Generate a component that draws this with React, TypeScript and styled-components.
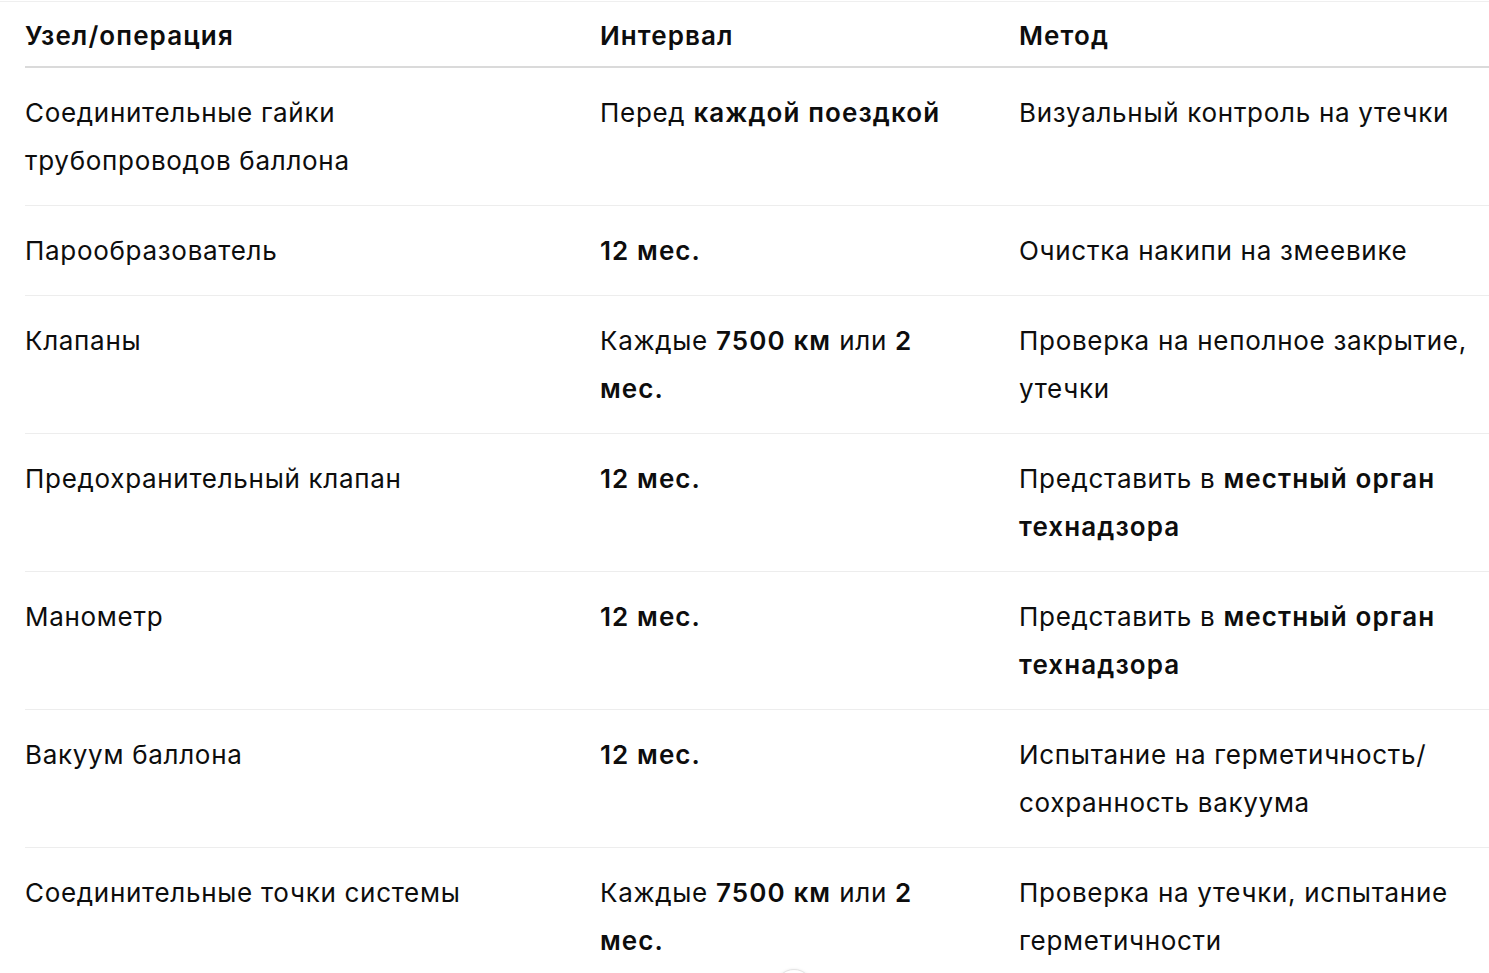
import React from "react";
import styled, { createGlobalStyle } from "styled-components";

const GlobalStyle = createGlobalStyle`
  html, body {
    margin: 0;
    padding: 0;
    background: #ffffff;
    overflow: hidden;
  }
  body {
    font-family: Inter, "Noto Sans", "Liberation Sans", sans-serif;
    color: #0d0d0d;
    -webkit-font-smoothing: antialiased;
  }
`;

const Page = styled.div`
  position: relative;
  width: 1489px;
  height: 973px;
  overflow: hidden;
  padding-top: 1px;
  box-sizing: border-box;
`;

const TopRule = styled.div`
  height: 1px;
  background: #efefef;
`;

const Table = styled.table`
  margin-left: 25px;
  width: 1464px;
  border-collapse: collapse;
  table-layout: fixed;
  font-size: 26px;
  line-height: 48px;
  letter-spacing: 0.7px;
`;

const HeadCell = styled.th`
  text-align: left;
  font-weight: 600;
  letter-spacing: 1.1px;
  padding: 10px 0 6px 0;
  border-bottom: 2px solid #dadada;
  vertical-align: top;
`;

const Row = styled.tr<{ $last?: boolean }>`
  border-bottom: ${(p) => (p.$last ? "none" : "1px solid #ededed")};
`;

const Cell = styled.td<{ $pr: number }>`
  padding: 21px ${(p) => p.$pr}px 20px 0;
  vertical-align: top;
  font-weight: 400;
`;

const B = styled.strong`
  font-weight: 600;
  letter-spacing: 1.1px;
`;

const ScrollButton = styled.div`
  position: absolute;
  left: 775px;
  top: 969px;
  width: 36px;
  height: 36px;
  border-radius: 50%;
  background: #ffffff;
  border: 1px solid #e3e3e3;
  box-shadow: 0 0 3px rgba(0, 0, 0, 0.08);
`;

type RowData = [React.ReactNode, React.ReactNode, React.ReactNode];

const rows: RowData[] = [
  ["Соединительные гайки трубопроводов баллона", <>Перед <B>каждой поездкой</B></>, "Визуальный контроль на утечки"],
  ["Парообразователь", <B>12 мес.</B>, "Очистка накипи на змеевике"],
  ["Клапаны", <>Каждые <B>7500 км</B> или <B>2 мес.</B></>, "Проверка на неполное закрытие, утечки"],
  ["Предохранительный клапан", <B>12 мес.</B>, <>Представить в <B>местный орган технадзора</B></>],
  ["Манометр", <B>12 мес.</B>, <>Представить в <B>местный орган технадзора</B></>],
  ["Вакуум баллона", <B>12 мес.</B>, "Испытание на герметичность/сохранность вакуума"],
  ["Соединительные точки системы", <>Каждые <B>7500 км</B> или <B>2 мес.</B></>, "Проверка на утечки, испытание герметичности"],
];

export default function App() {
  return (
    <>
      <GlobalStyle />
      <Page>
        <TopRule />
        <Table>
          <colgroup>
            <col style={{ width: 575 }} />
            <col style={{ width: 419 }} />
            <col />
          </colgroup>
          <thead>
            <tr>
              <HeadCell>Узел/операция</HeadCell>
              <HeadCell>Интервал</HeadCell>
              <HeadCell>Метод</HeadCell>
            </tr>
          </thead>
          <tbody>
            {rows.map((r, i) => (
              <Row key={i} $last={i === rows.length - 1}>
                <Cell $pr={75}>{r[0]}</Cell>
                <Cell $pr={56}>{r[1]}</Cell>
                <Cell $pr={0}>{r[2]}</Cell>
              </Row>
            ))}
          </tbody>
        </Table>
        <ScrollButton />
      </Page>
    </>
  );
}
